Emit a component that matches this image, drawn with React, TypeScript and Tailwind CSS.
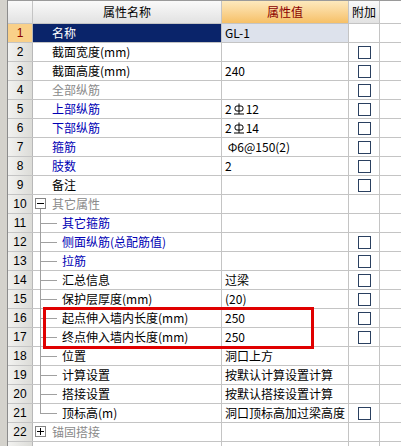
import React from "react";

type Row = {
  n: number;
  name: string;
  value?: React.ReactNode;
  cb?: boolean;
  color?: "black" | "blue" | "gray" | "sel";
  kind?: "top" | "group-open" | "group-closed" | "child" | "last";
};

const Rebar = () => (
  <svg width="12" height="12" viewBox="0 0 12 12" className="inline-block align-[-1px] mx-[1px]">
    <rect x="2" y="3" width="8" height="5" rx="2" fill="none" stroke="#000" strokeWidth="1" />
    <line x1="6" y1="0.5" x2="6" y2="11" stroke="#000" strokeWidth="1" />
    <line x1="1" y1="11" x2="11" y2="11" stroke="#000" strokeWidth="1" />
  </svg>
);

const rows: Row[] = [
  { n: 1, name: "名称", value: "GL-1", color: "sel", kind: "top" },
  { n: 2, name: "截面宽度(mm)", value: "", cb: true, kind: "top" },
  { n: 3, name: "截面高度(mm)", value: "240", cb: true, kind: "top" },
  { n: 4, name: "全部纵筋", value: "", cb: true, color: "gray", kind: "top" },
  { n: 5, name: "上部纵筋", value: (<>2<Rebar />12</>), cb: true, color: "blue", kind: "top" },
  { n: 6, name: "下部纵筋", value: (<>2<Rebar />14</>), cb: true, color: "blue", kind: "top" },
  { n: 7, name: "箍筋", value: "\u00a0Φ6@150(2)", cb: true, color: "blue", kind: "top" },
  { n: 8, name: "肢数", value: "2", cb: true, color: "blue", kind: "top" },
  { n: 9, name: "备注", value: "", cb: true, kind: "top" },
  { n: 10, name: "其它属性", color: "gray", kind: "group-open" },
  { n: 11, name: "其它箍筋", color: "blue", kind: "child" },
  { n: 12, name: "侧面纵筋(总配筋值)", cb: true, color: "blue", kind: "child" },
  { n: 13, name: "拉筋", cb: true, color: "blue", kind: "child" },
  { n: 14, name: "汇总信息", value: "过梁", cb: true, kind: "child" },
  { n: 15, name: "保护层厚度(mm)", value: "(20)", cb: true, kind: "child" },
  { n: 16, name: "起点伸入墙内长度(mm)", value: "250", cb: true, kind: "child" },
  { n: 17, name: "终点伸入墙内长度(mm)", value: "250", cb: true, kind: "child" },
  { n: 18, name: "位置", value: "洞口上方", kind: "child" },
  { n: 19, name: "计算设置", value: "按默认计算设置计算", kind: "child" },
  { n: 20, name: "搭接设置", value: "按默认搭接设置计算", kind: "child" },
  { n: 21, name: "顶标高(m)", value: "洞口顶标高加过梁高度", cb: true, kind: "last" },
  { n: 22, name: "锚固搭接", color: "gray", kind: "group-closed" },
];

const colorCls = (c?: Row["color"]) =>
  c === "blue" ? "text-[#0000b4]" : c === "gray" ? "text-[#8a8a8a]" : c === "sel" ? "text-white" : "text-black";

function NameCell({ r }: { r: Row }) {
  const sel = r.color === "sel";
  return (
    <div
      className={`relative w-[189px] shrink-0 border-r border-[#c4c4c4] flex items-center ${sel ? "bg-[#0a246a]" : "bg-white"}`}
    >
      {r.kind === "group-open" || r.kind === "group-closed" ? (
        <>
          <div className="absolute left-[2px] top-[3px] w-[11px] h-[11px] border border-[#848484] bg-white flex items-center justify-center">
            <div className="w-[7px] h-[1px] bg-black" />
            {r.kind === "group-closed" && <div className="absolute w-[1px] h-[7px] bg-black" />}
          </div>
          {r.kind === "group-open" && (
            <div className="absolute left-[7px] top-[14px] bottom-[-1px] w-[1px] bg-[#a0a0a0]" />
          )}
        </>
      ) : null}
      {(r.kind === "child" || r.kind === "last") && (
        <>
          <div
            className={`absolute left-[7px] top-0 w-[1px] bg-[#a0a0a0] ${r.kind === "last" ? "h-[9px]" : "bottom-[-1px]"}`}
          />
          <div className="absolute left-[7px] top-[9px] w-[17px] h-[1px] bg-[#a0a0a0]" />
        </>
      )}
      <span
        className={`${colorCls(r.color)} whitespace-nowrap ${r.kind === "child" || r.kind === "last" ? "pl-[29px]" : "pl-[19px]"}`}
      >
        {r.name}
      </span>
    </div>
  );
}

export default function App() {
  return (
    <div
      className="relative w-[401px] h-[446px] overflow-hidden bg-white flex text-[12px] leading-[18px]"
      style={{ fontFamily: '"Noto Sans CJK SC", "Noto Sans", sans-serif' }}
    >
      <div className="w-[8px] shrink-0 bg-[#d4d2cc] border-r border-[#8c8c8c]" />
      <div className="flex-1 flex flex-col">
        {/* header */}
        <div className="flex h-[24px] shrink-0 border-t border-[#9a9a9a] border-b border-b-[#c4c4c4] bg-gradient-to-b from-[#fafafa] to-[#e2e2e2]">
          <div className="w-[25px] shrink-0 border-r border-[#c4c4c4]" />
          <div className="w-[189px] shrink-0 border-r border-[#c4c4c4] flex items-center justify-center text-black">
            属性名称
          </div>
          <div className="w-[127px] shrink-0 border-r border-[#c4c4c4] flex items-center justify-center text-[#8b0000] bg-gradient-to-b from-[#fde9bd] to-[#f6c066]">
            属性值
          </div>
          <div className="w-[31px] shrink-0 border-r border-[#c4c4c4] flex items-center justify-center text-black">
            附加
          </div>
          <div className="flex-1 bg-white" />
        </div>
        {rows.map((r) => (
          <div key={r.n} className="flex h-[19px] shrink-0 border-b border-[#c4c4c4]">
            <div
              className={`w-[25px] shrink-0 border-r border-[#b8b8b8] flex items-center justify-center ${
                r.n === 1
                  ? "bg-[#f9d089] text-[#8b0000]"
                  : "bg-gradient-to-r from-[#f2f2f0] to-[#dcdcd8] text-black"
              }`}
              style={{ fontFamily: '"Liberation Sans", sans-serif' }}
            >
              {r.n}
            </div>
            <NameCell r={r} />
            <div
              className={`w-[127px] shrink-0 border-r border-[#c4c4c4] flex items-center pl-[3px] whitespace-nowrap text-black ${
                r.n === 1 ? "bg-[#dde2ec]" : "bg-white"
              }`}
            >
              {r.value}
            </div>
            <div className="w-[31px] shrink-0 border-r border-[#c4c4c4] flex items-center justify-center bg-white">
              {r.cb && <div className="w-[13px] h-[13px] border border-[#2a4060] bg-white" />}
            </div>
            <div className="flex-1 bg-white" />
          </div>
        ))}
        <div className="flex h-[19px] shrink-0">
          <div className="w-[25px] shrink-0 border-r border-[#b8b8b8] bg-gradient-to-r from-[#f2f2f0] to-[#dcdcd8]" />
          <div className="w-[189px] shrink-0 border-r border-[#c4c4c4]" />
          <div className="w-[127px] shrink-0 border-r border-[#c4c4c4]" />
          <div className="w-[31px] shrink-0 border-r border-[#c4c4c4]" />
        </div>
      </div>
      {/* red annotation */}
      <div className="absolute left-[43px] top-[307px] w-[271px] h-[42px] border-[3px] border-[#e00000] pointer-events-none" />
    </div>
  );
}
